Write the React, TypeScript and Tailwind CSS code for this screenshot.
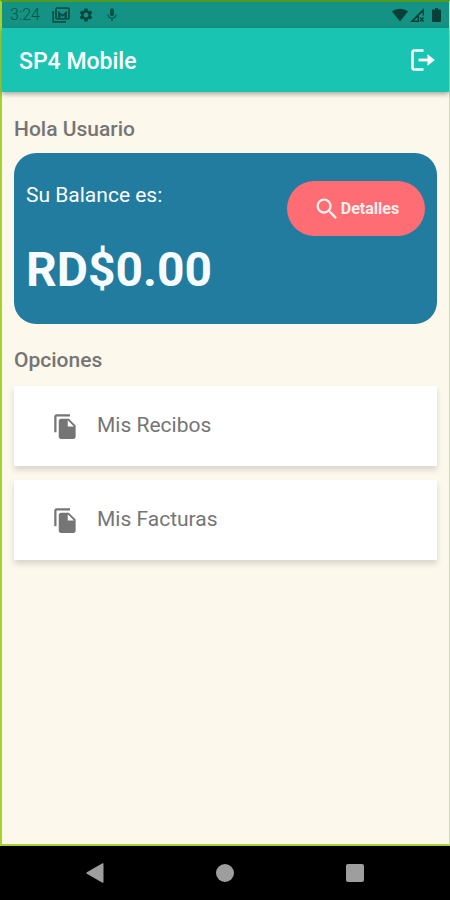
import { MdFileCopy, MdMic, MdSearch, MdSettings } from 'react-icons/md';

const options = [
  { id: 'recibos', label: 'Mis Recibos' },
  { id: 'facturas', label: 'Mis Facturas' },
];

function StatusBar() {
  return (
    <div className="flex h-[26px] items-center justify-between bg-[#149384] px-2 text-[#0b5049]">
      <div className="flex items-center">
        <span className="text-base leading-none font-light">3:24</span>
        <svg className="ml-3 h-4 w-[18px]" viewBox="0 0 18 16" fill="none" stroke="currentColor" strokeWidth="1.8">
          <path d="M1.2 4v10.8H14" />
          <rect x="4" y="1.2" width="13" height="10.6" rx="1" />
          <path d="M6 11V3.800l4.500 3.800L15 3.800V11h-2.600V8.500l-1.900 1.300-1.900-1.300V11z" fill="currentColor" stroke="none" />
        </svg>
        <MdSettings className="ml-2 size-4 text-[#0a4640]" />
        <MdMic className="ml-2.5 size-4" />
      </div>
      <div className="flex items-center text-[#083f39]">
        <svg className="h-3.5 w-4" viewBox="0 0 16 14" fill="currentColor">
          <path d="M0 3.4C4.6-.1 11.4-.1 16 3.4L8 13.4z" />
        </svg>
        <svg className="ml-0.5 h-3.5 w-3.5" viewBox="0 0 14 14" fill="currentColor">
          <path d="M0 14 14 0v7.500h-1.500V4L9 7.500V14zM4 12.500h3.500V9z" fillRule="evenodd" />
          <path d="m10 9.500 3.600 4m0-4-3.600 4" stroke="currentColor" strokeWidth="1.300" />
        </svg>
        <svg className="ml-2 h-3.5 w-[9px]" viewBox="0 0 9 14" fill="currentColor">
          <path d="M3 0h3v1.500h2q1 0 1 1V13q0 1-1 1H1q-1 0-1-1V2.500q0-1 1-1h2z" />
        </svg>
      </div>
    </div>
  );
}

function AppBar() {
  return (
    <header className="relative flex h-16 items-center justify-between bg-[#1ac4b3] pr-3.5 pl-[17px] text-white shadow-[0_2px_5px_rgba(0,0,0,0.35)]">
      <h1 className="pt-1 text-[23px] leading-7 font-medium">SP4 Mobile</h1>
      <button type="button" aria-label="Salir">
        <svg className="h-[22px] w-6" viewBox="0 0 24 22" fill="none" stroke="currentColor" strokeWidth="2.5">
          <path d="M12.500 1.500H3.300Q1.500 1.500 1.500 3.300v15.400q0 1.800 1.800 1.800h9.200" />
          <path d="M7.500 11H18" strokeWidth="2.800" />
          <path d="M16.500 5.200 23.800 11l-7.300 5.800z" fill="currentColor" stroke="none" />
        </svg>
      </button>
    </header>
  );
}

function BalanceCard() {
  return (
    <section className="flex items-start justify-between rounded-[22px] bg-[#217c9f] px-3 pt-7 pb-[22px] text-white">
      <div>
        <p className="text-[21px] leading-7">Su Balance es:</p>
        <p className="mt-[29px] text-5xl leading-[64px] font-bold text-[#f6fbff]">RD$0.00</p>
      </div>
      <button
        type="button"
        className="flex h-[55px] w-[138px] items-center justify-center rounded-full bg-[#ff6d74] text-base font-bold text-[#fff0ee]"
      >
        <MdSearch className="size-7" />
        Detalles
      </button>
    </section>
  );
}

export default function App() {
  return (
    <div className="flex min-h-screen flex-col bg-black font-[Roboto,sans-serif]">
      <div className="flex flex-1 flex-col border-t-2 border-r border-b-2 border-l-2 border-t-[#539a24] border-r-[#cfe28f] border-b-[#a5cf35] border-l-[#a6d22d] bg-[#fdf8ec]">
        <StatusBar />
        <AppBar />
        <main className="px-3 pt-[23px] text-[#757575]">
          <h2 className="mb-2.5 text-[21px] leading-7 font-medium">Hola Usuario</h2>
          <BalanceCard />
          <h2 className="mt-[22px] mb-3 text-[21px] leading-7 font-medium">Opciones</h2>
          <div className="flex flex-col gap-3.5">
            {options.map((option) => (
              <button
                key={option.id}
                type="button"
                className="flex h-20 items-center gap-[18px] bg-white pl-[38px] text-[21px] shadow-[0_4px_6px_rgba(0,0,0,0.14)]"
              >
                <MdFileCopy className="size-[27px]" />
                {option.label}
              </button>
            ))}
          </div>
        </main>
      </div>
      <nav className="flex h-[54px] items-center justify-around px-[30px] text-[#9e9e9e]">
        <button type="button" aria-label="Atrás">
          <svg className="h-5 w-[18px]" viewBox="0 0 18 20" fill="currentColor">
            <path d="M16.500.300Q17.500 0 17.500 1v18q0 1-1 .700L.800 10.800q-1-.800 0-1.600z" />
          </svg>
        </button>
        <button type="button" aria-label="Inicio" className="size-[18px] rounded-full bg-[#9e9e9e]" />
        <button type="button" aria-label="Recientes" className="size-[18px] rounded-xs bg-[#9e9e9e]" />
      </nav>
    </div>
  );
}
